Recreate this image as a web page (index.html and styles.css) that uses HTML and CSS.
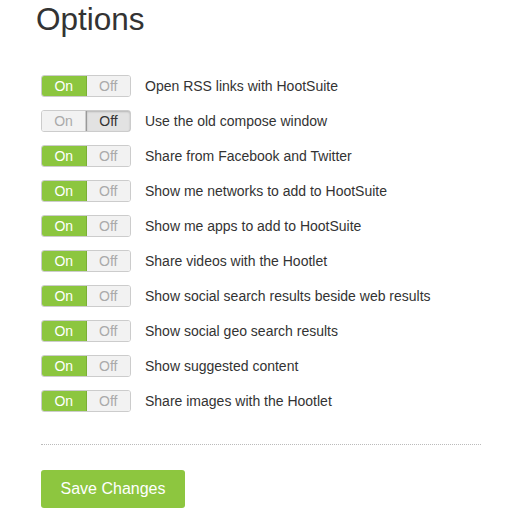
FILE: index.html
```html
<!DOCTYPE html>
<html lang="en">
<head>
    <meta charset="UTF-8">
    <title>Options</title>
    <link rel="stylesheet" href="styles.css">
</head>
<body>
    <div class="container">
        <h1>Options</h1>
        <ul class="options">
            <li><span class="toggle"><span class="on active">On</span><span class="off">Off</span></span>Open RSS links with HootSuite</li>
            <li><span class="toggle"><span class="on">On</span><span class="off active">Off</span></span>Use the old compose window</li>
            <li><span class="toggle"><span class="on active">On</span><span class="off">Off</span></span>Share from Facebook and Twitter</li>
            <li><span class="toggle"><span class="on active">On</span><span class="off">Off</span></span>Show me networks to add to HootSuite</li>
            <li><span class="toggle"><span class="on active">On</span><span class="off">Off</span></span>Show me apps to add to HootSuite</li>
            <li><span class="toggle"><span class="on active">On</span><span class="off">Off</span></span>Share videos with the Hootlet</li>
            <li><span class="toggle"><span class="on active">On</span><span class="off">Off</span></span>Show social search results beside web results</li>
            <li><span class="toggle"><span class="on active">On</span><span class="off">Off</span></span>Show social geo search results</li>
            <li><span class="toggle"><span class="on active">On</span><span class="off">Off</span></span>Show suggested content</li>
            <li><span class="toggle"><span class="on active">On</span><span class="off">Off</span></span>Share images with the Hootlet</li>
        </ul>
        <hr class="divider">
        <button class="button">Save Changes</button>
    </div>
</body>
</html>
```

FILE: styles.css
```css
body {
    margin: 0;
    padding: 0;
    font-family: Arial, "Liberation Sans", sans-serif;
    background-color: #fff;
    color: #333;
}
.container {
    padding: 0 26px 0 41px;
}
h1 {
    margin: 0 0 0 -5px;
    padding-top: 2px;
    font-size: 31.5px;
    font-weight: normal;
    line-height: 34px;
    color: #333;
}
.options {
    list-style: none;
    margin: 32px 0 0 0;
    padding: 0;
}
.options li {
    display: flex;
    align-items: center;
    height: 35px;
    font-size: 14px;
}
.toggle {
    display: flex;
    width: 90px;
    height: 22px;
    margin-right: 14px;
    border: 1px solid #ccc;
    border-radius: 3px;
    box-sizing: border-box;
    overflow: hidden;
}
.toggle span {
    flex: 1;
    display: flex;
    align-items: center;
    justify-content: center;
    font-size: 14px;
    color: #aaa;
    background-color: #f2f2f2;
}
.toggle .on {
    border-right: 1px solid #ccc;
}
.toggle .on.active {
    background-color: #8cc63f;
    color: #fff;
    margin: -1px 0 -1px -1px;
    border: 1px solid #7aaf35;
}
.toggle .off.active {
    background-color: #e2e2e2;
    color: #333;
    box-shadow: inset 0 1px 2px rgba(0, 0, 0, 0.2);
    margin: -1px -1px -1px 0;
    border: 1px solid #999;
    border-radius: 0 3px 3px 0;
}
.divider {
    margin: 26px 0 0 0;
    border: none;
    border-top: 1px dotted #bbb;
    width: 440px;
}
.button {
    display: inline-block;
    margin-top: 25px;
    width: 144px;
    height: 38px;
    padding: 0;
    font-family: Arial, "Liberation Sans", sans-serif;
    font-size: 16px;
    color: #fff;
    background-color: #8dc63f;
    border: none;
    border-radius: 3px;
    cursor: pointer;
}
```
